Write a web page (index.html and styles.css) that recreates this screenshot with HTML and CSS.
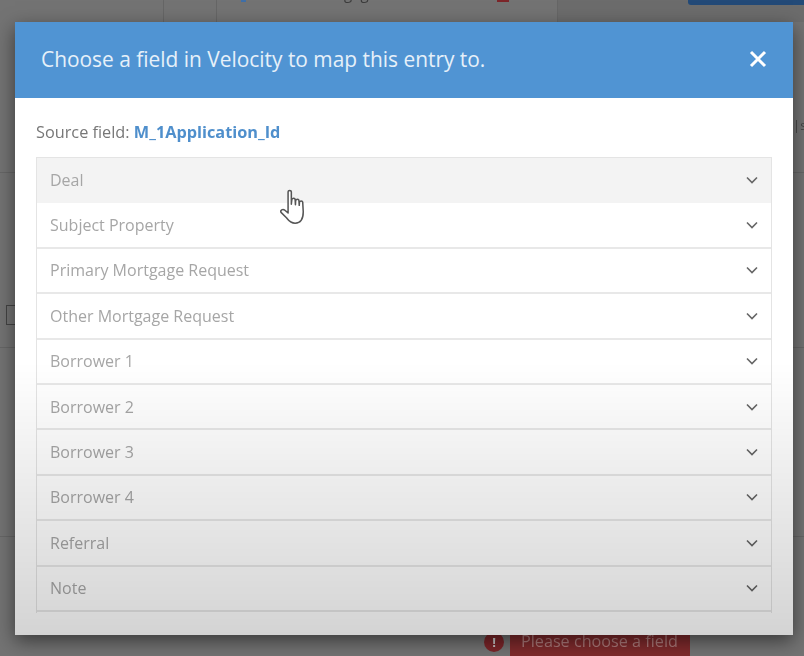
FILE: index.html
```html
<!DOCTYPE html>
<html lang="en">
<head>
  <meta charset="UTF-8" />
  <title>Map field</title>
  <link rel="stylesheet" href="styles.css">
</head>
<body>
  <!-- Page behind the modal -->
  <div class="page">
    <div class="page-top">
      <div class="top-cell top-a"></div>
      <div class="top-cell top-b"></div>
      <div class="top-cell top-c"><span class="top-dot"></span><span class="top-text">Mortgage</span><span class="top-flag"></span></div>
      <div class="top-cell top-d"><span class="top-btn"></span></div>
    </div>
    <div class="page-rule rule-1"></div>
    <div class="page-rule rule-2"></div>
    <div class="page-rule rule-3"></div>
    <span class="page-box"></span>
    <span class="page-side">|s</span>
    <div class="page-error">
      <span class="error-icon">!</span>
      <span class="error-text">Please choose a field</span>
    </div>
  </div>

  <!-- Modal -->
  <div class="modal">
    <div class="modal-header">
      <h2>Choose a field in Velocity to map this entry to.</h2>
      <svg class="close" width="18" height="18" viewBox="0 0 18 18"><path d="M2 2 L16 16 M16 2 L2 16" /></svg>
    </div>
    <div class="modal-body">
      <p class="source">Source field: <strong>M_1Application_Id</strong></p>
      <ul class="fields">
        <li class="field active">Deal<svg class="chev" viewBox="0 0 12 8"><path d="M1 1.5 L6 6.5 L11 1.5" /></svg></li>
        <li class="field">Subject Property<svg class="chev" viewBox="0 0 12 8"><path d="M1 1.5 L6 6.5 L11 1.5" /></svg></li>
        <li class="field">Primary Mortgage Request<svg class="chev" viewBox="0 0 12 8"><path d="M1 1.5 L6 6.5 L11 1.5" /></svg></li>
        <li class="field">Other Mortgage Request<svg class="chev" viewBox="0 0 12 8"><path d="M1 1.5 L6 6.5 L11 1.5" /></svg></li>
        <li class="field">Borrower 1<svg class="chev" viewBox="0 0 12 8"><path d="M1 1.5 L6 6.5 L11 1.5" /></svg></li>
        <li class="field">Borrower 2<svg class="chev" viewBox="0 0 12 8"><path d="M1 1.5 L6 6.5 L11 1.5" /></svg></li>
        <li class="field">Borrower 3<svg class="chev" viewBox="0 0 12 8"><path d="M1 1.5 L6 6.5 L11 1.5" /></svg></li>
        <li class="field">Borrower 4<svg class="chev" viewBox="0 0 12 8"><path d="M1 1.5 L6 6.5 L11 1.5" /></svg></li>
        <li class="field">Referral<svg class="chev" viewBox="0 0 12 8"><path d="M1 1.5 L6 6.5 L11 1.5" /></svg></li>
        <li class="field">Note<svg class="chev" viewBox="0 0 12 8"><path d="M1 1.5 L6 6.5 L11 1.5" /></svg></li>
      </ul>
    </div>
    <div class="fade"></div>
  </div>

  <!-- Mouse pointer -->
  <svg class="pointer" width="31" height="39" viewBox="0 0 28 36">
    <path d="M9 3.5 C9 2 12 2 12 3.5 L12 15 L12.5 10.5 C13 9 15.5 9 15.5 10.5 L15.8 15.5 L16 11.5 C16.5 10 19 10 19 11.5 L19.3 16 L19.5 13 C20 11.7 22.3 11.7 22.5 13 L23 22 C23 28 21 32.5 15.5 32.5 C11 32.5 9.5 30 7.5 27.5 L2.5 22.5 C1.5 20.5 4 19 6 20.5 L9 23 Z" />
  </svg>
</body>
</html>
```

FILE: styles.css
```css
* {
  margin: 0;
  padding: 0;
  box-sizing: border-box;
}
html, body {
  height: 100%;
  overflow: hidden;
}
body {
  font-family: "Open Sans", sans-serif;
  background-color: #737373;
  filter: blur(0.7px);
}
/* Page behind */
.page {
  position: relative;
  height: 656px;
  overflow: hidden;
}
.page-top {
  display: flex;
  height: 22px;
}
.top-cell {
  border-right: 1px solid #666;
}
.top-a {
  width: 164px;
}
.top-b {
  width: 53px;
}
.top-c {
  width: 341px;
  position: relative;
  overflow: hidden;
}
.top-dot {
  position: absolute;
  left: 24px;
  top: 0;
  width: 5px;
  height: 2px;
  background-color: #3f6fa8;
}
.top-text {
  position: absolute;
  left: 93px;
  top: -17px;
  font-size: 15px;
  color: #3c3c3c;
}
.top-flag {
  position: absolute;
  left: 280px;
  top: 0;
  width: 12px;
  height: 2px;
  background-color: #7c2529;
}
.top-d {
  flex: 1;
  display: flex;
  justify-content: flex-end;
  align-items: flex-start;
  border-right: none;
  background-color: #6c6c6c;
}
.top-btn {
  width: 116px;
  height: 5px;
  background-color: #234a78;
  border-radius: 0 0 0 3px;
}
.page-rule {
  height: 1px;
  background-color: #666;
}
.rule-1 {
  margin-top: 150px;
}
.rule-2 {
  margin-top: 174px;
}
.rule-3 {
  margin-top: 188px;
}
.page-box {
  position: absolute;
  left: 6px;
  top: 305px;
  width: 12px;
  height: 20px;
  border: 1px solid #444;
}
.page-side {
  position: absolute;
  left: 793px;
  top: 116px;
  font-size: 13px;
  color: #444;
}
.page-error {
  position: absolute;
  left: 484px;
  top: 630px;
  display: flex;
  gap: 6px;
}
.error-icon {
  width: 20px;
  height: 20px;
  margin-top: 2px;
  border-radius: 50%;
  background-color: #7c2529;
  color: #ccc;
  font-size: 13px;
  font-weight: 700;
  text-align: center;
  line-height: 20px;
}
.error-text {
  width: 180px;
  height: 26px;
  padding: 0 11px;
  line-height: 22px;
  background-color: #7f2a2c;
  color: #ad7a7a;
  font-size: 16.2px;
  white-space: nowrap;
}
/* Modal */
.modal {
  position: absolute;
  left: 15px;
  top: 22px;
  width: 778px;
  height: 613px;
  background-color: #fff;
  box-shadow: 0 6px 18px rgba(0,0,0,0.5);
}
.modal-header {
  display: flex;
  justify-content: space-between;
  align-items: center;
  height: 76px;
  padding: 0 26px 2px;
  background-color: #5094d3;
  color: #e6f0f9;
}
.modal-header h2 {
  font-size: 20.9px;
  font-weight: 400;
}
.close path {
  fill: none;
  stroke: #fff;
  stroke-width: 3;
}
.modal-body {
  padding: 23px 21px 0;
}
.source {
  font-size: 16.3px;
  line-height: 22px;
  color: #777;
  white-space: nowrap;
}
.source strong {
  color: #4f8fcc;
  font-weight: 700;
}
.fields {
  list-style: none;
  margin-top: 14px;
  padding-bottom: 1px;
  border: 1px solid #e4e4e4;
  border-bottom-width: 0;
}
.field {
  display: flex;
  justify-content: space-between;
  align-items: center;
  height: 45.4px;
  padding: 0 13px;
  border-bottom: 2px solid #e8e8e8;
  font-size: 16px;
  color: #a6a6a6;
}
.field.active {
  padding-bottom: 2px;
  background-color: #f3f3f3;
  border-bottom: none;
}
.chev {
  width: 12px;
  height: 8px;
}
.chev path {
  fill: none;
  stroke: #666;
  stroke-width: 1.6;
}
/* Video fade at the lower half */
.fade {
  position: absolute;
  left: 0;
  right: 0;
  top: 340px;
  bottom: 0;
  background: linear-gradient(rgba(0,0,0,0), rgba(0,0,0,0.17));
}
.pointer {
  position: absolute;
  left: 278px;
  top: 188px;
}
.pointer path {
  fill: #fff;
  stroke: #555;
  stroke-width: 1.4;
  stroke-linejoin: round;
}
```
